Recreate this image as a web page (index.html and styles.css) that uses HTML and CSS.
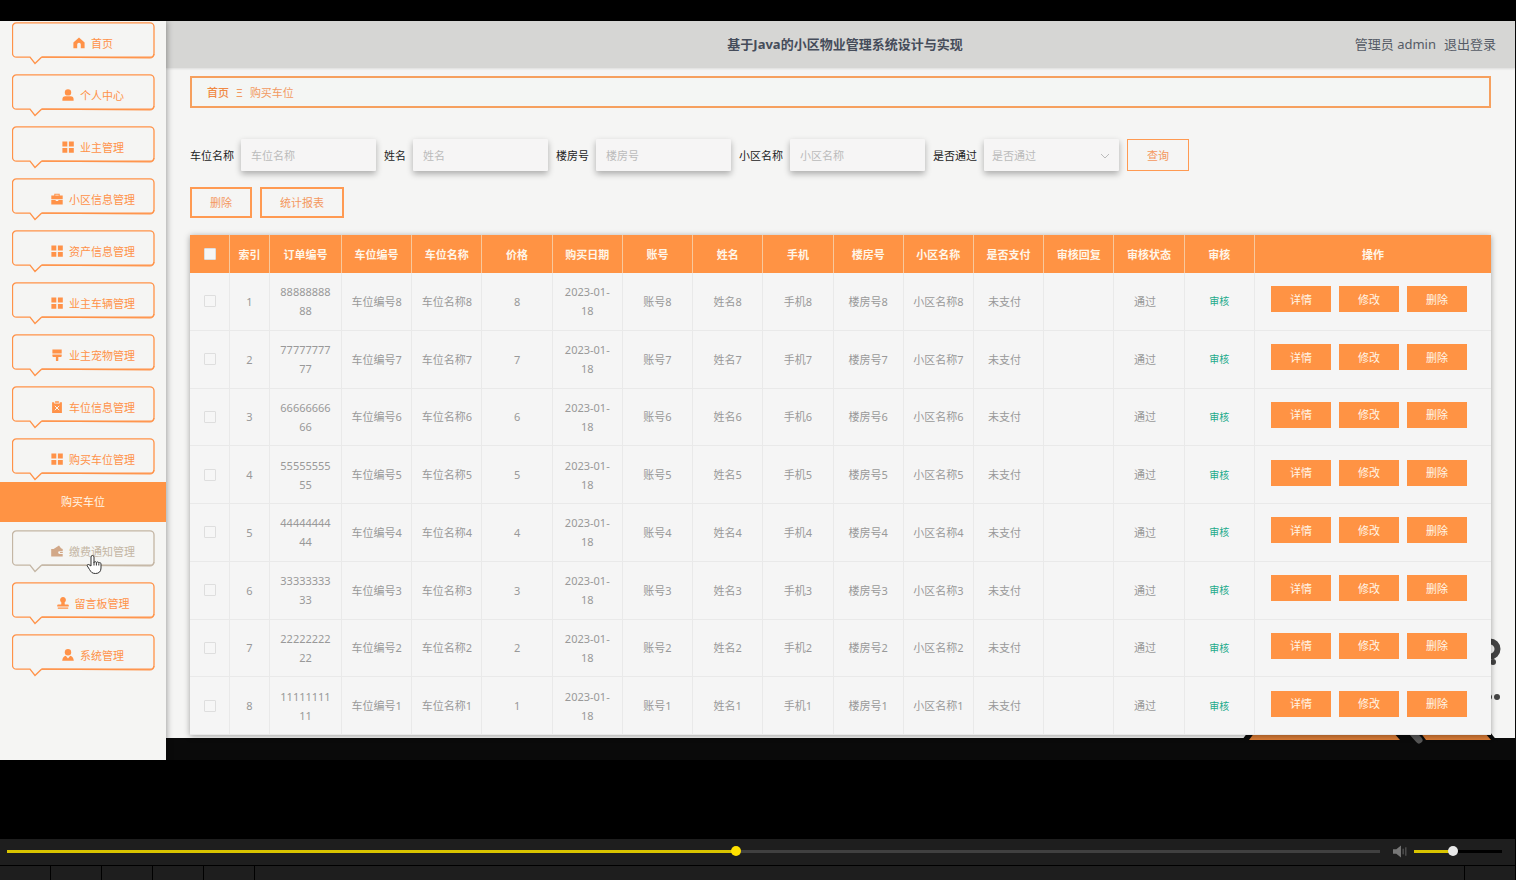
FILE: index.html
```html
<!DOCTYPE html>
<html lang="zh-CN">
<head>
<meta charset="utf-8">
<title>基于Java的小区物业管理系统设计与实现</title>
<link rel="stylesheet" href="styles.css">
</head>
<body>
<svg class="defs" aria-hidden="true">
  <symbol id="frame" viewBox="0 0 144 44">
    <path class="frame-line" d="M4.500 .8H138a4 4 0 0 1 4 4V31.200a4 4 0 0 1-4 4H29.500L23 41.500 18 35.200H4.500a4 4 0 0 1-4-4V4.800a4 4 0 0 1 4-4z"/>
    <path class="frame-edge" d="M30 35.200 138 35.900a4 4 0 0 0 4-4"/>
  </symbol>
  <symbol id="home" viewBox="0 0 12 12"><path d="M6 .6 11.600 5.400V11.200H7.800V7.600a1.800 1.800 0 0 0-3.600 0V11.200H.4V5.400z"/></symbol>
  <symbol id="user" viewBox="0 0 12 12"><circle cx="6" cy="3.400" r="3.200"/><path d="M.4 11.800V10.300a3 3 0 0 1 3-3H8.600a3 3 0 0 1 3 3v1.500z"/></symbol>
  <symbol id="grid" viewBox="0 0 12 12"><path d="M.4.6H5.300V5.500H.4zM6.900.6h4.900V5.500H6.900zM.4 7H5.300v4.800H.4zM6.900 7h4.900v4.800H6.900z"/></symbol>
  <symbol id="case" viewBox="0 0 12 12"><path d="M3.300 2.600V.8H8.700V2.600H11.700V6.200H.3V2.600zM4.300 1.800v.8H7.700V1.800zM.3 7H4.700v1H7.300V7h4.400v4.400H.3z" fill-rule="evenodd"/></symbol>
  <symbol id="brush" viewBox="0 0 12 12"><path d="M1.400.4h9.300V4.600H1.400zM1.400 5.400h9.300v1.700a1 1 0 0 1-1 1H7.300V11.200a1.200 1.200 0 0 1-2.400 0V8.100H2.400a1 1 0 0 1-1-1z"/></symbol>
  <symbol id="clip" viewBox="0 0 12 12"><path d="M1.100 1.200H3.200V2.600H8.800V1.200h2.100V12H1.100zM4.100.3H7.900V1.800H4.100z"/><path class="cut" d="m3.800 4.800 4.400 4.400m0-4.400L3.800 9.200"/></symbol>
  <symbol id="wallet" viewBox="0 0 12 12"><path d="M.2 4H2.600L8 .6 10 3.200 11.700 4V6.200H8.500a1.400 1.400 0 0 0 0 2.800h3.200V11.600H.2zM9 7h2.800v1H9z"/></symbol>
  <symbol id="stamp" viewBox="0 0 12 12"><path d="M4.400 5.400a2.900 2.900 0 1 1 3.200 0L7.800 7.400H10.800a1 1 0 0 1 1 1v1.200H.2V8.400a1 1 0 0 1 1-1H4.200zM.8 10.600H11.200v1.200H.8z"/></symbol>
  <symbol id="admin" viewBox="0 0 12 12"><circle cx="6" cy="3.300" r="3.200"/><path d="M.2 11.800C.4 8.700 2 7 3.800 6.700L6 9.500 8.200 6.700c1.800.3 3.400 2 3.600 5.100z"/></symbol>
</svg>

<section class="video">
  <div class="screen">
    <nav class="sidebar">
      <ul class="menu">
        <li><a class="item" href="#"><svg class="frame"><use href="#frame"/></svg><svg class="icon"><use href="#home"/></svg>首页</a></li>
        <li><a class="item" href="#"><svg class="frame"><use href="#frame"/></svg><svg class="icon"><use href="#user"/></svg>个人中心</a></li>
        <li><a class="item" href="#"><svg class="frame"><use href="#frame"/></svg><svg class="icon"><use href="#grid"/></svg>业主管理</a></li>
        <li><a class="item" href="#"><svg class="frame"><use href="#frame"/></svg><svg class="icon"><use href="#case"/></svg>小区信息管理</a></li>
        <li><a class="item" href="#"><svg class="frame"><use href="#frame"/></svg><svg class="icon"><use href="#grid"/></svg>资产信息管理</a></li>
        <li><a class="item" href="#"><svg class="frame"><use href="#frame"/></svg><svg class="icon"><use href="#grid"/></svg>业主车辆管理</a></li>
        <li><a class="item" href="#"><svg class="frame"><use href="#frame"/></svg><svg class="icon"><use href="#brush"/></svg>业主宠物管理</a></li>
        <li><a class="item" href="#"><svg class="frame"><use href="#frame"/></svg><svg class="icon"><use href="#clip"/></svg>车位信息管理</a></li>
        <li><a class="item" href="#"><svg class="frame"><use href="#frame"/></svg><svg class="icon"><use href="#grid"/></svg>购买车位管理</a>
          <a class="subitem" href="#">购买车位</a></li>
        <li><a class="item hovered" href="#"><svg class="frame"><use href="#frame"/></svg><svg class="icon"><use href="#wallet"/></svg>缴费通知管理</a>
          <svg class="pointer" viewBox="0 0 16 21"><path d="M5 12V3a1.500 1.500 0 0 1 3 0V8.500a1.300 1.300 0 0 1 2.400 0 1.300 1.300 0 0 1 2.400.7 1.200 1.200 0 0 1 2.200.8V14c0 3.500-2 5.500-5.500 5.500S5 18 3.500 15.500L1.300 12c-.6-1.200.8-2 1.800-1.200z"/><path d="M8 8v3.500M10.400 8.700v2.800M12.800 9.500v2"/></svg></li>
        <li><a class="item" href="#"><svg class="frame"><use href="#frame"/></svg><svg class="icon"><use href="#stamp"/></svg>留言板管理</a></li>
        <li><a class="item" href="#"><svg class="frame"><use href="#frame"/></svg><svg class="icon"><use href="#admin"/></svg>系统管理</a></li>
      </ul>
    </nav>

    <main class="main">
      <header class="topbar">
        <h1 class="title">基于Java的小区物业管理系统设计与实现</h1>
        <div class="account"><span>管理员 admin</span><a href="#">退出登录</a></div>
      </header>
      <svg class="art" viewBox="0 0 272 112" aria-hidden="true">
        <circle class="ring" cx="247" cy="15" r="7.500"/>
        <circle cx="250" cy="28" r="3"/><circle cx="246" cy="63" r="3"/><circle cx="254" cy="63" r="3"/>
        <path class="ink" d="M-1 106 5 98H247l8 10H-1z"/>
        <path class="orange" d="M6 106 12 98H150l7 8zM177 98h64l7 8h-65z"/>
        <path class="pen" d="m167 96 9 10"/>
      </svg>
      <div class="content">
        <nav class="crumbs"><a class="crumb-home" href="#">首页</a><span>Ξ</span><span>购买车位</span></nav>
        <form class="filters">
          <div class="field"><label for="space">车位名称</label><input class="control" id="space" placeholder="车位名称"></div>
          <div class="field"><label for="person">姓名</label><input class="control" id="person" placeholder="姓名"></div>
          <div class="field"><label for="building">楼房号</label><input class="control" id="building" placeholder="楼房号"></div>
          <div class="field"><label for="estate">小区名称</label><input class="control" id="estate" placeholder="小区名称"></div>
          <div class="field"><label for="passed">是否通过</label>
            <span class="select-wrap"><select class="control" id="passed"><option>是否通过</option></select><svg class="chevron" viewBox="0 0 10 6"><path d="m1 1 4 4 4-4"/></svg></span></div>
          <button class="outline search" type="button">查询</button>
        </form>
        <div class="tools">
          <button class="outline" type="button">删除</button>
          <button class="outline" type="button">统计报表</button>
        </div>
        <table class="orders">
          <colgroup><col class="col-check"><col class="col-index"><col class="col-order"><col span="13"><col class="col-actions"></colgroup>
          <thead><tr>
            <th><input type="checkbox" class="tick" aria-label="全选"></th><th>索引</th><th>订单编号</th><th>车位编号</th><th>车位名称</th><th>价格</th><th>购买日期</th><th>账号</th><th>姓名</th><th>手机</th><th>楼房号</th><th>小区名称</th><th>是否支付</th><th>审核回复</th><th>审核状态</th><th>审核</th><th>操作</th>
          </tr></thead>
          <tbody id="rows"></tbody>
        </table>
      </div>
    </main>
  </div>
</section>

<footer class="player">
  <div class="controls">
    <input class="range seek" type="range" min="0" max="1000" value="531" aria-label="播放进度">
    <button class="mute" type="button" aria-label="音量"><svg viewBox="0 0 16 13"><path d="M0 4H3.500L8.500 0V13L3.500 9H0z"/><path class="wave" d="M10.800 3.500v6M13.700 2v9"/></svg></button>
    <input class="range volume" type="range" min="0" max="100" value="44" aria-label="音量大小">
  </div>
  <div class="status"><i></i><i></i><i></i><i></i><i></i><i class="last"></i></div>
</footer>
<script src="script.js"></script>
</body>
</html>
```
FILE: styles.css
```css
* { box-sizing: border-box; }

body {
  margin: 0;
  min-height: 100vh;
  display: flex;
  flex-direction: column;
  background: #000;
  color: #222;
  font: 11px/19px "Noto Sans", "Noto Sans CJK SC", sans-serif;
}

a { color: inherit; text-decoration: none; }
button, input, select { font: inherit; margin: 0; }
.defs { position: absolute; width: 0; height: 0; }

.video { flex: 1; display: flex; padding: 21px 0 79px; }
.screen { flex: 1; display: flex; align-items: flex-start; background: #0a0a0a; }

/* Sidebar */
.sidebar {
  flex: none;
  align-self: stretch;
  width: 166px;
  padding-top: 1px;
  background: #f5f5f3;
  box-shadow: 1px 0 6px rgba(0, 0, 0, .35);
  position: relative;
  z-index: 1;
}
.menu { margin: 0; padding: 0; list-style: none; display: flex; flex-direction: column; gap: 8px; }
.menu li { position: relative; }
.item {
  position: relative;
  display: flex;
  align-items: center;
  justify-content: center;
  gap: 6px;
  height: 44px;
  margin: 0 10px 0 12px;
  padding: 0 0 2px 18px;
  color: #ff9248;
}
.frame { position: absolute; left: 0; top: 0; width: 144px; height: 44px; }
.frame-line, .frame-edge { fill: none; stroke: currentColor; stroke-width: 1.3; }
.icon { width: 12px; height: 12px; fill: currentColor; }
.cut { stroke: #f5f5f3; stroke-width: 1; }
.hovered { color: #c4b6a4; }
.hovered .icon { color: #d2a888; }
.subitem {
  display: flex;
  align-items: center;
  justify-content: center;
  height: 40px;
  padding-bottom: 1px;
  background: #ff9344;
  color: #fff6e8;
}
.pointer {
  position: absolute;
  left: 86px;
  top: 24px;
  width: 16px;
  height: 21px;
  fill: #fff;
  stroke: #333;
  stroke-width: 1;
}

/* Main column */
.main { flex: 1; min-width: 0; margin-right: 1px; background: #f5f5f4; position: relative; }
.topbar {
  display: grid;
  grid-template-columns: 1fr auto 1fr;
  align-items: center;
  height: 47px;
  padding: 0 19px 0 28px;
  background: #d6d6d4;
  box-shadow: 0 1px 2px rgba(0, 0, 0, .1);
  color: #555b66;
  font-size: 13px;
}
.title { grid-column: 2; margin: 0; font-size: 13px; font-weight: 700; color: #454c5a; }
.account { display: flex; justify-content: flex-end; gap: 8px; }
.art { position: absolute; right: 0; bottom: -8px; width: 272px; height: 112px; fill: #444; overflow: visible; }
.ring { fill: none; stroke: #444; stroke-width: 6; }
.ink { fill: #0a0a0a; }
.orange { fill: #d97b35; }
.pen { fill: none; stroke: #555; stroke-width: 7; stroke-linecap: round; }

.content { position: relative; padding: 8px 24px 3px; }
.crumbs {
  display: flex;
  align-items: center;
  gap: 7px;
  height: 32px;
  padding: 0 15px;
  border: 2px solid #f6a05e;
  background: #f4f6f4;
  color: #f29a62;
}
.crumb-home { font-weight: 500; color: #f08a45; }

.filters { display: flex; flex-wrap: wrap; gap: 8px; margin-top: 31px; }
.field { display: flex; align-items: center; gap: 7px; }
.control {
  width: 135px;
  height: 32px;
  padding: 0 10px;
  border: 0;
  border-radius: 1px;
  background: #f6f5f5;
  box-shadow: 0 3px 6px rgba(0, 0, 0, .3);
  color: #bbb;
}
.control::placeholder { color: #bbb; opacity: 1; }
select.control { display: block; appearance: none; padding: 0 8px; }
.select-wrap { position: relative; }
.chevron { position: absolute; right: 9px; top: 14px; width: 10px; height: 6px; fill: none; stroke: #bbb; }
.outline {
  height: 31px;
  padding: 0 18px;
  border: 2px solid #ff9a52;
  background: transparent;
  color: #f4985e;
}
.search { height: 32px; padding: 0 19px; border-width: 1px; }
.tools { display: flex; gap: 8px; margin: 16px 0 17px; }

/* Orders table */
.orders {
  width: 100%;
  height: 500px;
  table-layout: fixed;
  border-spacing: 0;
  background: #f5f5f5;
  box-shadow: 0 1px 6px rgba(0, 0, 0, .35);
  color: #999;
  text-align: center;
}
.col-check { width: 40px; }
.col-index { width: 40px; }
.col-order { width: 72px; }
.col-actions { width: 236px; }
th, td { padding: 0 8px; border-right: 1px solid #e9e9e9; border-bottom: 1px solid #e9e9e9; }
th { height: 38px; padding: 0; background: #ff9344; color: #fff6e8; border-right-color: #f8c89c; border-bottom: 0; }
th:last-child, td:last-child { border-right: 0; }
.order { padding: 0 9px; overflow-wrap: anywhere; }
.state { padding: 0 16px 0 8px; }
.tick {
  appearance: none;
  display: block;
  width: 12px;
  height: 12px;
  margin: 0 auto;
  border: 1px solid #dedede;
  border-radius: 1px;
  background: #f6f6f6;
}
.check { padding: 0; }
.audit { padding: 0; border: 0; background: none; color: #1eab8c; font-size: 10px; }
.actions { display: flex; gap: 8px; padding: 0 8px 4px; }
.action { width: 60px; height: 26px; padding: 0; border: 0; background: #ff9344; color: #fff6e8; }

/* Player chrome */
.player { margin-right: 1px; }
.controls {
  display: flex;
  align-items: center;
  height: 26px;
  padding: 0 13px 1px 7px;
  background: #1e1e1e;
}
.range { appearance: none; height: 12px; background: none; }
.seek { flex: 1; min-width: 0; }
.volume { width: 88px; }
.range::-webkit-slider-runnable-track { height: 3px; }
.seek::-webkit-slider-runnable-track { background: linear-gradient(90deg, #d9c400 53%, #404040 53%); }
.volume::-webkit-slider-runnable-track { background: linear-gradient(90deg, #d9c400 44%, #000 44%); }
.range::-webkit-slider-thumb {
  appearance: none;
  width: 10px;
  height: 10px;
  margin-top: -4px;
  border-radius: 50%;
  background: #ffe100;
}
.volume::-webkit-slider-thumb { background: #e8e8e8; }
.mute { display: flex; margin: 0 6px 0 13px; padding: 0; border: 0; background: none; }
.mute svg { width: 15px; height: 13px; fill: #777; }
.wave { stroke: #666; stroke-width: 1; }
.status { display: flex; height: 15px; border-top: 1px solid #000; background: #1e1e1e; }
.status i { width: 51px; border-right: 1px solid #000; }
.status .last { margin-left: auto; margin-right: 50px; width: 1px; }
```
FILE: script.js
```js
const rows = [8, 7, 6, 5, 4, 3, 2, 1].map((n, i) => `<tr>
  <td class="check"><input type="checkbox" class="tick" aria-label="选择第${i + 1}行"></td>
  <td>${i + 1}</td>
  <td class="order">${String(n).repeat(10)}</td>
  <td>车位编号${n}</td><td>车位名称${n}</td><td>${n}</td><td>2023-01-18</td>
  <td>账号${n}</td><td>姓名${n}</td><td>手机${n}</td><td>楼房号${n}</td><td>小区名称${n}</td>
  <td class="state">未支付</td><td></td><td class="state">通过</td>
  <td><button class="audit" type="button">审核</button></td>
  <td><div class="actions">
    <button class="action" type="button">详情</button>
    <button class="action" type="button">修改</button>
    <button class="action" type="button">删除</button>
  </div></td>
</tr>`);
document.getElementById("rows").innerHTML = rows.join("");
```
